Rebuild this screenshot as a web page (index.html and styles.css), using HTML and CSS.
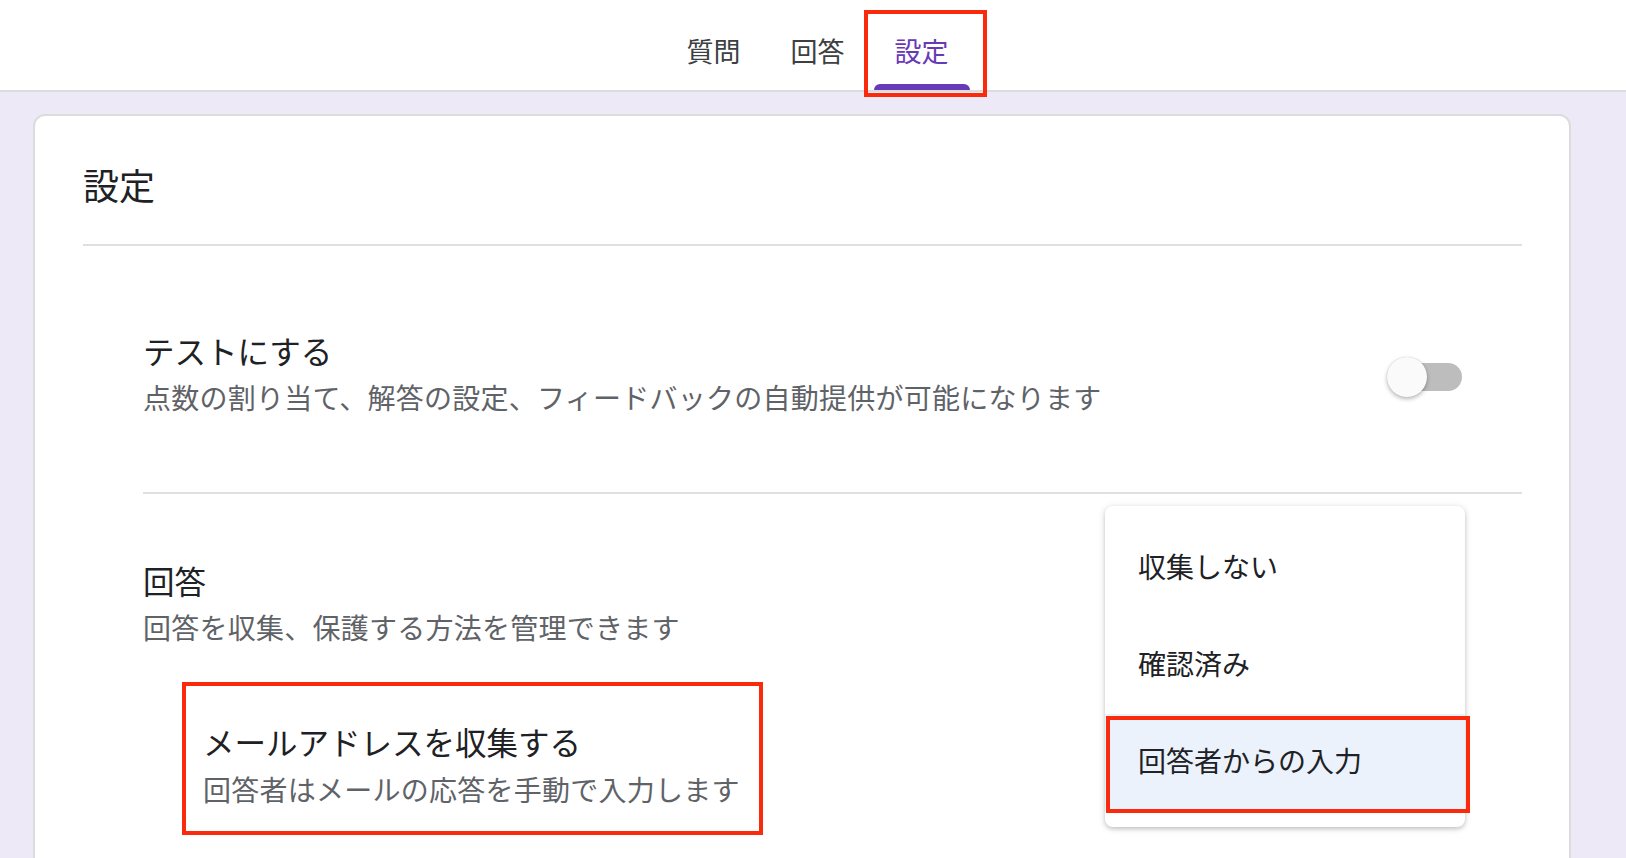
FILE: index.html
```html
<!DOCTYPE html>
<html lang="ja">
<head>
<meta charset="utf-8">
<title>設定</title>
<link rel="stylesheet" href="styles.css">
</head>
<body>
<header class="topbar">
  <nav class="tabs">
    <div class="tab">質問</div>
    <div class="tab">回答</div>
    <div class="tab tab-active">設定<span class="mark-tab"></span></div>
  </nav>
</header>
<main class="page">
  <section class="card">
    <h1 class="card-title">設定</h1>
    <div class="sections">
      <div class="setting-row">
        <div class="setting-text">
          <div class="setting-title">テストにする</div>
          <div class="setting-desc">点数の割り当て、解答の設定、フィードバックの自動提供が可能になります</div>
        </div>
        <div class="switch"><span class="switch-track"></span><span class="switch-thumb"></span></div>
      </div>
      <div class="setting-block">
        <div class="setting-title">回答</div>
        <div class="setting-desc">回答を収集、保護する方法を管理できます</div>
        <div class="sub-setting">
          <div class="sub-title">メールアドレスを収集する</div>
          <div class="setting-desc">回答者はメールの応答を手動で入力します</div>
        </div>
      </div>
    </div>
    <div class="menu">
      <div class="menu-item">収集しない</div>
      <div class="menu-item">確認済み</div>
      <div class="menu-item menu-item-selected">回答者からの入力</div>
    </div>
  </section>
</main>
</body>
</html>
```

FILE: styles.css
```css
html, body {
  margin: 0;
  padding: 0;
  height: 858px;
  overflow: hidden;
}
body {
  background: #ede9f7;
  font-family: "Noto Sans CJK JP", "Noto Sans", sans-serif;
  color: #202124;
}
.topbar {
  background: #fff;
  height: 90px;
  border-bottom: 2px solid #dcdcdc;
  position: relative;
  z-index: 2;
}
.tabs {
  display: flex;
  justify-content: center;
  padding-left: 9px;
  height: 90px;
}
.tab {
  position: relative;
  width: 104px;
  box-sizing: border-box;
  text-align: center;
  font-size: 27px;
  line-height: 40px;
  padding-top: 31px;
  color: #3c4043;
}
.tab-active {
  color: #673ab7;
}
.tab-active::after {
  content: "";
  position: absolute;
  left: 4px;
  right: 4px;
  bottom: 0;
  height: 6px;
  background: #673ab7;
  border-radius: 6px 6px 0 0;
}
.mark-tab {
  position: absolute;
  left: -6px;
  right: -13px;
  top: 10px;
  bottom: -7px;
  border: 4px solid #fa2a0c;
  pointer-events: none;
}
.page {
  padding: 22px 55px 0 33px;
}
.card {
  position: relative;
  background: #fff;
  border: 2px solid #dcdcdc;
  border-bottom: 0;
  border-radius: 12px 12px 0 0;
  padding: 0 47px 0 48px;
  height: 744px;
}
.card-title {
  margin: 0;
  font-weight: 400;
  font-size: 36px;
  line-height: 44px;
  padding: 46px 0 38px;
  border-bottom: 2px solid #e0e0e0;
}
.sections {
  padding-left: 60px;
}
.setting-row {
  display: flex;
  align-items: center;
  justify-content: space-between;
  padding: 82px 60px 70px 0;
  border-bottom: 2px solid #e0e0e0;
}
.setting-title {
  font-size: 31.5px;
  line-height: 44px;
}
.setting-desc {
  font-size: 28px;
  line-height: 50px;
  letter-spacing: 0.25px;
  color: #5f6368;
}
.switch {
  position: relative;
  width: 75px;
  height: 40px;
  margin-top: 4px;
  flex: none;
}
.switch-track {
  position: absolute;
  right: 0;
  top: 6px;
  width: 68px;
  height: 28px;
  border-radius: 14px;
  background: #bdbdbd;
}
.switch-thumb {
  position: absolute;
  left: 0;
  top: 0;
  width: 40px;
  height: 40px;
  border-radius: 50%;
  background: #fafafa;
  box-shadow: 0 2px 4px rgba(0, 0, 0, 0.28), 0 0 1px rgba(0, 0, 0, 0.2);
}
.setting-block {
  padding-top: 64px;
}
.sub-setting {
  display: inline-block;
  margin: 30px 0 0 39px;
  padding: 32px 19px 17px 17px;
  border: 4px solid #fa2a0c;
}
.sub-title {
  font-size: 31.5px;
  line-height: 46px;
}
.menu {
  position: absolute;
  left: 1070px;
  top: 390px;
  width: 360px;
  background: #fff;
  border-radius: 8px;
  padding: 14px 0 16px;
  box-shadow: 0 2px 4px rgba(0, 0, 0, 0.18), 0 1px 8px rgba(0, 0, 0, 0.1);
}
.menu-item {
  position: relative;
  height: 97px;
  line-height: 93px;
  padding-left: 33px;
  font-size: 28px;
  color: #202124;
}
.menu-item-selected {
  background: #ecf2fc;
}
.menu-item-selected::after {
  content: "";
  position: absolute;
  left: 1px;
  right: -5px;
  top: 2px;
  bottom: -2px;
  border: 4px solid #fa2a0c;
}
```
